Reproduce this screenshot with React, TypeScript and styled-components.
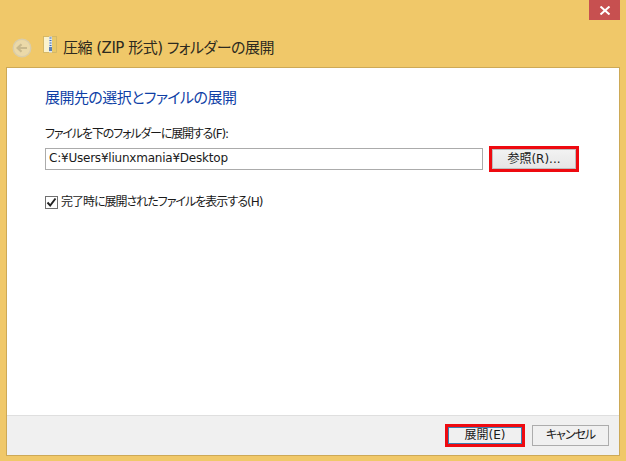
import React from 'react'
import styled, { createGlobalStyle } from 'styled-components'

const Global = createGlobalStyle`
  html, body { margin: 0; padding: 0; }
  body {
    font-family: "DejaVu Sans", "Noto Sans CJK JP", sans-serif;
    font-feature-settings: "palt";
  }
`

const Window = styled.div`
  width: 626px;
  height: 461px;
  box-sizing: border-box;
  background: #f0c869;
  display: flex;
  flex-direction: column;
  padding: 0 6px 5px 6px;
  overflow: hidden;
`

const TitleBar = styled.div`
  height: 30px;
  display: flex;
  justify-content: flex-end;
  align-items: flex-start;
`

const CloseButton = styled.div`
  width: 31px;
  height: 20px;
  background: #c75050;
  display: flex;
  align-items: center;
  justify-content: center;
`

const NavRow = styled.div`
  height: 37px;
  display: flex;
  align-items: center;
  padding: 0 0 4px 6px;
  box-sizing: border-box;
`

const BackButton = styled.div`
  width: 20px;
  height: 20px;
  display: flex;
  margin-right: 11px;
  margin-top: 3px;
`

const ZipIcon = styled.div`
  width: 15px;
  height: 18px;
  display: flex;
  margin-right: 5px;
  margin-top: -4px;
`

const Title = styled.div`
  font-size: 15px;
  line-height: 20px;
  color: #2d2a20;
  letter-spacing: -0.5px;
  white-space: nowrap;
  margin-top: 2px;
`

const Panel = styled.div`
  flex: 1;
  display: flex;
  flex-direction: column;
  background: #fff;
  border: 1px solid #cda956;
  min-height: 0;
`

const Content = styled.div`
  flex: 1;
  padding: 20px 38px 0 38px;
  display: flex;
  flex-direction: column;
`

const Heading = styled.div`
  font-size: 15px;
  line-height: 20px;
  color: #0f3fa6;
  letter-spacing: -0.55px;
  margin-bottom: 18px;
`

const FieldLabel = styled.div`
  font-size: 12px;
  line-height: 16px;
  color: #1a1a1a;
  letter-spacing: -1.15px;
  margin-bottom: 4px;
`

const PathRow = styled.div`
  display: flex;
  align-items: center;
  margin-bottom: 22px;
`

const PathInput = styled.div`
  width: 438px;
  height: 22px;
  box-sizing: border-box;
  border: 1px solid #ababab;
  font-size: 12px;
  line-height: 19px;
  letter-spacing: -0.22px;
  padding-left: 3px;
  color: #1a1a1a;
  margin-right: 6px;
  white-space: nowrap;
`

const Highlight = styled.div`
  border: 3px solid #ee0a10;
  display: flex;
`

const Button = styled.div<{ $focused?: boolean }>`
  width: 74px;
  height: 17px;
  box-sizing: border-box;
  border: 1px solid ${p => (p.$focused ? '#3c7fb1' : '#acacac')};
  background: #f0f0f0;
  font-size: 12px;
  line-height: 15px;
  text-align: center;
  color: #1a1a1a;
  white-space: nowrap;
`

const BrowseButton = styled(Button)`
  width: 84px;
  height: 20px;
  line-height: 18px;
  border-color: #bdbdbd;
  background: linear-gradient(#f2f2f2, #e6e6e6);
`

const CheckRow = styled.div`
  display: flex;
  align-items: center;
  height: 16px;
`

const CheckBox = styled.div`
  width: 13px;
  height: 13px;
  box-sizing: border-box;
  border: 1px solid #707070;
  background: #fff;
  margin-right: 3px;
  display: flex;
`

const CheckLabel = styled.div`
  font-size: 12px;
  line-height: 16px;
  color: #1a1a1a;
  letter-spacing: -1px;
`

const Footer = styled.div`
  height: 40px;
  flex-shrink: 0;
  box-sizing: border-box;
  background: #f0f0f0;
  border-top: 1px solid #dfdfdf;
  display: flex;
  align-items: center;
  justify-content: flex-end;
  gap: 7px;
  padding: 0 10px 0 0;
`

const CancelButton = styled(Button)`
  height: 21px;
  width: 77px;
  line-height: 19px;
  letter-spacing: -1px;
`

const App = () => (
  <Window>
    <Global />
    <TitleBar>
      <CloseButton>
        <svg width="12" height="9" viewBox="0 0 12 9">
          <path d="M1.5 0.5 L10.5 8.5 M10.5 0.5 L1.5 8.5" stroke="#fff" strokeWidth="2" fill="none" />
        </svg>
      </CloseButton>
    </TitleBar>
    <NavRow>
      <BackButton>
        <svg width="20" height="20" viewBox="0 0 20 20">
          <circle cx="10" cy="10" r="8.8" fill="#ebd9a8" stroke="#d9cdaa" strokeWidth="1.4" />
          <path d="M15 10 H6 M9.5 6.2 L5.6 10 L9.5 13.8" stroke="#c9b98d" strokeWidth="2.2" fill="none" />
        </svg>
      </BackButton>
      <ZipIcon>
        <svg width="15" height="18" viewBox="0 0 15 18">
          <rect x="0.5" y="0.5" width="13" height="16" fill="#e9c96a" stroke="#cfb466" strokeWidth="0.8" />
          <rect x="1" y="1" width="5" height="15" fill="#fbf3cf" />
          <rect x="6" y="0.5" width="3" height="16" fill="#dfe6ee" />
          <path d="M6.5 2 H8.5 M6.5 4.5 H8.5 M6.5 7 H8.5 M6.5 9.5 H8.5" stroke="#3f6db0" strokeWidth="1.1" />
          <rect x="6" y="11" width="3" height="4" fill="#5c7fb5" />
        </svg>
      </ZipIcon>
      <Title>圧縮 (ZIP 形式) フォルダーの展開</Title>
    </NavRow>
    <Panel>
      <Content>
        <Heading>展開先の選択とファイルの展開</Heading>
        <FieldLabel>ファイルを下のフォルダーに展開する(F):</FieldLabel>
        <PathRow>
          <PathInput>C:¥Users¥liunxmania¥Desktop</PathInput>
          <Highlight>
            <BrowseButton>参照(R)...</BrowseButton>
          </Highlight>
        </PathRow>
        <CheckRow>
          <CheckBox>
            <svg width="11" height="11" viewBox="0 0 11 11">
              <path d="M1.5 5.5 L4.2 8.5 L9.5 1.5" stroke="#222" strokeWidth="1.9" fill="none" />
            </svg>
          </CheckBox>
          <CheckLabel>完了時に展開されたファイルを表示する(H)</CheckLabel>
        </CheckRow>
      </Content>
      <Footer>
        <Highlight>
          <Button $focused>展開(E)</Button>
        </Highlight>
        <CancelButton>キャンセル</CancelButton>
      </Footer>
    </Panel>
  </Window>
)

export default App
